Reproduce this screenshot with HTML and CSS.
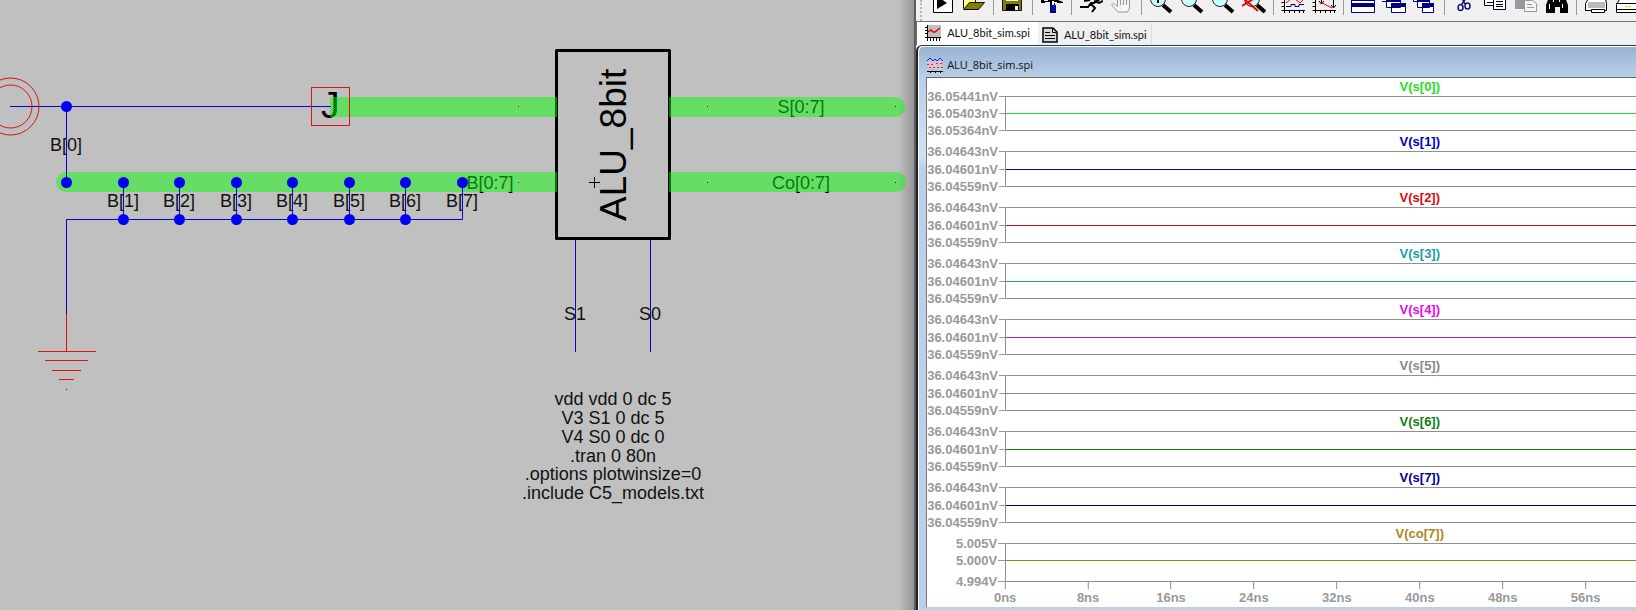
FILE: index.html
```
<!DOCTYPE html>
<html lang="en">
<head>
<meta charset="utf-8">
<title>ALU_8bit_sim</title>
<link rel="stylesheet" href="styles.css">
</head>
<body>
<main class="desktop">
<section class="schematic" aria-label="Schematic">
<svg class="canvas" xmlns="http://www.w3.org/2000/svg">
  <defs>
    <pattern id="dither" width="2" height="2" patternUnits="userSpaceOnUse">
      <rect class="d1" width="2" height="2"/>
      <path class="d2" d="M0 0h1v1h-1zM1 1h1v1h-1z"/>
    </pattern>
  </defs>
  <!-- net names drawn beneath the buses -->
  <g class="net under">
    <text x="490" y="189">B[0:7]</text>
    <text x="801" y="113">S[0:7]</text>
    <text x="801" y="189">Co[0:7]</text>
  </g>
  <text class="big" x="321" y="118">J</text>
  <!-- block -->
  <rect class="block" x="556.5" y="50.5" width="113" height="188"/>
  <text class="big" transform="translate(626 221) rotate(-90)">ALU_8bit</text>
  <path class="mark" d="M589 182.5h11M594.5 177v11"/>
  <!-- buses -->
  <path class="bus" d="M330 97h227v20h-227z"/>
  <path class="bus" d="M66 172h491v20h-491a10 10 0 0 1 0-20z"/>
  <path class="bus" d="M669 97h226a10 10 0 0 1 0 20h-226z"/>
  <path class="bus" d="M669 172h227a10 10 0 0 1 0 20h-227z"/>
  <path class="pin" d="M518 106h1v1h-1zM518 182h1v1h-1zM707 106h1v1h-1zM707 182h1v1h-1zM895 106h1v1h-1zM895 182h1v1h-1zM66 389h1v1h-1z"/>
  <g class="net">
    <text x="66" y="151">B[0]</text>
    <text x="123" y="207">B[1]</text>
    <text x="179" y="207">B[2]</text>
    <text x="236" y="207">B[3]</text>
    <text x="292" y="207">B[4]</text>
    <text x="349" y="207">B[5]</text>
    <text x="405" y="207">B[6]</text>
    <text x="462" y="207">B[7]</text>
    <text x="575" y="320">S1</text>
    <text x="650" y="320">S0</text>
    <text x="613" y="405">vdd vdd 0 dc 5</text>
    <text x="613" y="424">V3 S1 0 dc 5</text>
    <text x="613" y="443">V4 S0 0 dc 0</text>
    <text x="613" y="462">.tran 0 80n</text>
    <text x="613" y="480">.options plotwinsize=0</text>
    <text x="613" y="499">.include C5_models.txt</text>
  </g>
  <!-- wires -->
  <path class="wire" d="M10 106.5H331M66.5 106V182M66.5 314V219.5H462.5V182M123.5 182V219M179.5 182V219M236.5 182V219M292.5 182V219M349.5 182V219M405.5 182V219M575.5 240V352M650.5 240V352"/>
  <g class="dot">
    <circle cx="66.5" cy="106.5" r="5.5"/><circle cx="66.5" cy="182.5" r="5.5"/>
    <circle cx="123.5" cy="182.5" r="5.5"/><circle cx="179.5" cy="182.5" r="5.5"/><circle cx="236.5" cy="182.5" r="5.5"/><circle cx="292.5" cy="182.5" r="5.5"/><circle cx="349.5" cy="182.5" r="5.5"/><circle cx="405.5" cy="182.5" r="5.5"/><circle cx="462.5" cy="182.5" r="5.5"/>
    <circle cx="123.5" cy="219.5" r="5.5"/><circle cx="179.5" cy="219.5" r="5.5"/><circle cx="236.5" cy="219.5" r="5.5"/><circle cx="292.5" cy="219.5" r="5.5"/><circle cx="349.5" cy="219.5" r="5.5"/><circle cx="405.5" cy="219.5" r="5.5"/>
  </g>
  <!-- source, join and ground symbols -->
  <g class="symbol">
    <circle cx="10.5" cy="106.5" r="28.5"/><circle cx="10.5" cy="106.5" r="21.5"/>
    <rect x="311.5" y="87.5" width="38" height="38"/>
    <path d="M66.5 314v37M38 351.5h58M45 360.5h43M52 370.5h29M59 379.5h15"/>
  </g>
</svg>
</section>

<section class="viewer" aria-label="Simulator">
<div class="toolbar" role="toolbar" aria-label="Main">
  <button class="tool" aria-label="Run"><svg viewBox="0 0 24 21"><path fill="#fff" stroke="#000" d="M2.500-5v17.500h19v-17.500"/><path d="M6-4v13l10-6z"/></svg></button>
  <button class="tool" aria-label="Open"><svg viewBox="0 0 24 21"><path fill="#ffff80" stroke="#111" d="M1.500 8.500v-9h12v3"/><path fill="#808000" stroke="#111" d="M1.500 9.500l6-7h15l-6 7z"/></svg></button>
  <span class="sep"></span>
  <button class="tool" aria-label="Save"><svg viewBox="0 0 24 21"><path fill="#808000" stroke="#111" d="M1.500-2v12.500h19v-12.500"/><path fill="#f0f0f0" d="M5-2h12v3h-12z"/><path d="M5 4h13v6h-13z"/><path fill="#f0f0f0" d="M14 6h3v4h-3z"/></svg></button>
  <span class="sep"></span>
  <button class="tool" aria-label="Control panel"><svg viewBox="0 0 24 21"><path d="M1 0h3v1h4v-1h10l5 2v1h-6v-1h-3v2h-4v-2h-5v1h-4z"/><path fill="#0000d8" stroke="#001" d="M10.500 3.500h4v2h1v7h-5z"/><path fill="#fff" d="M12 1h2v4h-2z"/></svg></button>
  <span class="sep"></span>
  <button class="tool" aria-label="Start simulation"><svg viewBox="0 0 24 21"><path class="k2" d="M21-1l-6 4h-3l-3 4h-8M12 4l4 4-3 4M11 0l-6 1M15 1l5 2 4-2"/></svg></button>
  <button class="tool" aria-label="Halt"><svg viewBox="0 0 24 21"><path fill="#f8f8f8" stroke="#999" d="M8.500 12.500l-7-8 2-1 4 3v-9M10.500 5v-7M13.500 5v-7M16.500 5v-6M19.500 0v8l-2 4h-9"/></svg></button>
  <span class="sep"></span>
  <button class="tool" aria-label="Zoom area"><svg viewBox="0 0 24 21"><circle cx="9" cy="-1" r="7.500" fill="#c8ffff" stroke="#222"/><path stroke="#000" stroke-width="2" d="M9-3v6"/><path class="k3" d="M14 5l8 7"/></svg></button>
  <button class="tool" aria-label="Zoom back"><svg viewBox="0 0 24 21"><circle cx="9" cy="-1" r="7.500" fill="#c8ffff" stroke="#222"/><path class="k3" d="M14 5l8 7"/></svg></button>
  <button class="tool" aria-label="Zoom out"><svg viewBox="0 0 24 21"><circle cx="9" cy="-1" r="7.500" fill="#c8ffff" stroke="#222"/><path class="k3" d="M14 5l8 7"/></svg></button>
  <button class="tool" aria-label="Zoom full"><svg viewBox="0 0 24 21"><circle cx="10" cy="-1" r="7.500" fill="#c8ffff" stroke="#222"/><path class="k3" d="M15 5l8 7"/><path stroke="#f00" stroke-width="2" fill="none" d="M0 6l13-8M2-1l14 12"/></svg></button>
  <span class="sep"></span>
  <button class="tool" aria-label="Autorange"><svg viewBox="0 0 24 21"><path class="k1" d="M.5 10.500h24M3.500-1v14M.5 2.500h3M.5 6.500h3M8.500 10v3M13.500 10v3M18.500 10v3M22.500 10v3"/><path stroke="#e00" fill="none" d="M5 3l5-4M14-1l5 4 4-4"/><path stroke="#008" fill="none" d="M5 6.500h5v-2h4v2h4v-2h5"/></svg></button>
  <button class="tool" aria-label="Plot settings"><svg viewBox="0 0 24 21"><path class="k1" d="M.5 10.500h24M3.500-1v14M.5 2.500h3M.5 6.500h3M8.500 10v3M13.500 10v3M18.500 10v3M22.500 10v3M9.500-1v5M7 1l2.500 3 2.500-3M21.500-1v9M19 5l2.500 3 2.500-3"/><path stroke="#e00" fill="none" d="M8 2l12 6"/></svg></button>
  <span class="sep"></span>
  <button class="tool" aria-label="Tile windows"><svg viewBox="0 0 24 21"><path fill="#fff" stroke="#000080" d="M.5-5h23v17.500h-23z"/><path fill="#000080" d="M0 3h24v4h-24zM0-3h24v4h-24z"/></svg></button>
  <button class="tool" aria-label="Cascade windows"><svg viewBox="0 0 24 21"><path fill="#fff" stroke="#000080" d="M-.5-3.500h14v5h-14zM4.500-.5h14v8h-14zM9.500 3.500h14v9h-14z"/><path fill="#000080" d="M9 3h15v4h-15zM4 0h15v2h-15z"/></svg></button>
  <button class="tool" aria-label="Close windows"><svg viewBox="0 0 24 21"><path fill="#fff" stroke="#000080" d="M.5-3.500h10v5h-10zM4.500-.5h12v8h-12zM9.500 3.500h11v9h-11z"/><path fill="#000080" d="M9 3h12v4h-12zM4 0h13v2h-13z"/></svg></button>
  <span class="sep"></span>
  <button class="tool" aria-label="Cut"><svg viewBox="0 0 24 21"><g fill="none" stroke="#101070" stroke-width="1.500"><ellipse cx="8.500" cy="7.500" rx="2.500" ry="3"/><ellipse cx="15.500" cy="6" rx="2.500" ry="3"/><path d="M10 4l4-6M13 4l-3-6"/></g></svg></button>
  <button class="tool" aria-label="Copy"><svg viewBox="0 0 24 21"><path fill="#fff" stroke="#000" d="M1.500-3.500h11v9h-11z"/><path class="k1" d="M4 2.500h6"/><path fill="#fff" stroke="#000040" d="M10.500-2.500h12v12h-12z"/><path class="k1" d="M13 1.500h7M13 4.500h7M13 6.500h7"/></svg></button>
  <button class="tool" aria-label="Paste"><svg viewBox="0 0 24 21"><path fill="#999" d="M1-3h17v12h-17z"/><path fill="#f4f4f4" stroke="#999" d="M10.500 .5h8l4 3v8h-12z"/><path stroke="#999" d="M13 4.500h5M13 7.500h7"/></svg></button>
  <button class="tool" aria-label="Find"><svg viewBox="0 0 24 21"><path d="M4-3h6v3h4v-3h6l3 8v8h-8v-6h-5v6h-9v-8z"/><path stroke="#fff" fill="none" d="M4.500 4v5M17.500 4v4M8.500-1v3M14.500 0v2"/></svg></button>
  <span class="sep"></span>
  <button class="tool" aria-label="Print"><svg viewBox="0 0 24 21"><path fill="#fff" stroke="#000" d="M1.500 10.500v-7l3-5h17l1 5v7z"/><path fill="#bbb" d="M4 2h17v6h-17z"/><path fill="#fff" stroke="#000" d="M7.500 9.500h13v3h-13z"/></svg></button>
  <button class="tool" aria-label="Print setup"><svg viewBox="0 0 24 21"><path fill="#fff" stroke="#000" d="M1.500 12.500v-8l3-5h20v13z"/><path stroke="#000" d="M1 3.500h23M1 9.500h23"/><path stroke="#dd0" d="M10 6.500h6"/></svg></button>
</div>
<div class="tabs" role="tablist">
  <button class="tab current" role="tab" aria-selected="true"><svg class="icon" viewBox="0 0 16 16"><path fill="#c0c0c0" d="M2 0h14v13h-14z"/><path class="k1" d="M2.500 0v16M0 12.500h16M0 2.500h2M0 5.500h2M0 8.500h2M5.500 12v4M8.500 12v4M11.500 12v4M14.500 12v4"/><path fill="none" stroke="#e00" stroke-width="1.500" d="M3 7l3-2 2 2h2l5-4"/></svg><span>ALU_8bit_sim.spi</span></button>
  <button class="tab" role="tab" aria-selected="false"><svg class="icon" viewBox="0 0 16 16"><path fill="#d8d8d8" stroke="#000" stroke-width="1.500" d="M1 1h10l4 4v10h-14z"/><path stroke="#000" fill="none" d="M10.500 1v4.500h4M3 5.500h5M3 8.500h10M3 11.500h10"/></svg><span>ALU_8bit_sim.spi</span></button>
</div>
<article class="window">
  <header class="titlebar"><svg class="icon" viewBox="0 0 16 16"><path fill="#d8c4d0" d="M1 4h14v8h-14z"/><path fill="none" stroke="#22c" d="M0 4l3-3 3 3 2-2 2 2 3-3 3 3"/><path fill="none" stroke="#c33" stroke-dasharray="2 2" d="M0 7.500h8M2 10.500h14M9 6.500h6"/><path class="k1" d="M0 14.500h16M3.500 15v1M8.500 15v1M13.500 15v1"/></svg><h1 class="title">ALU_8bit_sim.spi</h1></header>
  <div class="client">
  <div class="plots">
    <section class="plot first"><h2 class="name lime">V(s[0])</h2><div class="axis"><span>36.05441nV</span><span>36.05403nV</span><span>36.05364nV</span></div><div class="chart"><div class="trace lime"></div></div></section>
    <section class="plot"><h2 class="name blue">V(s[1])</h2><div class="axis"><span>36.04643nV</span><span>36.04601nV</span><span>36.04559nV</span></div><div class="chart"><div class="trace navy"></div></div></section>
    <section class="plot"><h2 class="name red">V(s[2])</h2><div class="axis"><span>36.04643nV</span><span>36.04601nV</span><span>36.04559nV</span></div><div class="chart"><div class="trace darkred"></div></div></section>
    <section class="plot"><h2 class="name teal">V(s[3])</h2><div class="axis"><span>36.04643nV</span><span>36.04601nV</span><span>36.04559nV</span></div><div class="chart"><div class="trace teal"></div></div></section>
    <section class="plot"><h2 class="name magenta">V(s[4])</h2><div class="axis"><span>36.04643nV</span><span>36.04601nV</span><span>36.04559nV</span></div><div class="chart"><div class="trace purple"></div></div></section>
    <section class="plot"><h2 class="name gray">V(s[5])</h2><div class="axis"><span>36.04643nV</span><span>36.04601nV</span><span>36.04559nV</span></div><div class="chart"><div class="trace gray"></div></div></section>
    <section class="plot"><h2 class="name green">V(s[6])</h2><div class="axis"><span>36.04643nV</span><span>36.04601nV</span><span>36.04559nV</span></div><div class="chart"><div class="trace green"></div></div></section>
    <section class="plot"><h2 class="name navy">V(s[7])</h2><div class="axis"><span>36.04643nV</span><span>36.04601nV</span><span>36.04559nV</span></div><div class="chart"><div class="trace midnight"></div></div></section>
    <section class="plot last"><h2 class="name gold">V(co[7])</h2><div class="axis"><span>5.005V</span><span>5.000V</span><span>4.994V</span></div><div class="chart"><div class="trace olive"></div></div></section>
    <div class="time"><span>0ns</span><span>8ns</span><span>16ns</span><span>24ns</span><span>32ns</span><span>40ns</span><span>48ns</span><span>56ns</span></div>
  </div>
  </div>
</article>
</section>
</main>
</body>
</html>
```
FILE: styles.css
```
* { box-sizing: border-box; }

body {
  margin: 0;
  font-family: "Liberation Sans", Arial, sans-serif;
  background: #c0c0c0;
  overflow: hidden;
}

.desktop {
  display: flex;
  height: 100vh;
}

/* schematic editor */
.schematic {
  flex: 0 0 56%;
  min-width: 0;
  overflow: hidden;
  border-right: 2px solid #5c5c5c;
  background: linear-gradient(to left, #969696, #c0c0c0 16px);
}

.canvas { display: block; width: 100%; height: 100%; }
.net { font-size: 18px; fill: #111; text-anchor: middle; }
.under { fill: #000; }
.big { font-size: 37px; fill: #000; }
.block { fill: #c0c0c0; stroke: #000; stroke-width: 3; stroke-linejoin: round; }
.mark { stroke: #000; }
.bus { fill: url(#dither); }
.d1 { fill: #0f0; fill-opacity: .34; }
.d2 { fill: #0f0; fill-opacity: .4; }
.pin { fill: #222; }
.wire { fill: none; stroke: #0808c4; }
.dot { fill: #0000f4; }
.symbol { fill: none; stroke: #e01010; }

/* simulator */
.viewer {
  flex: 1;
  min-width: 0;
  display: flex;
  flex-direction: column;
  overflow: hidden;
  background: #f0f0f0;
}

.toolbar {
  display: flex;
  gap: 7px;
  height: 21px;
  padding-left: 9px;
  margin-left: 4px;
  border-left: 2px dotted #b4b4b4;
  overflow: hidden;
}

.tool {
  flex: none;
  width: 24px;
  height: 21px;
  padding: 0;
  border: 0;
  background: none;
}
.tool svg { display: block; width: 24px; height: 21px; }
.sep { flex: none; width: 1px; height: 15px; background: #999; }
.k1 { fill: none; stroke: #000; }
.k2 { fill: none; stroke: #000; stroke-width: 2; }
.k3 { fill: none; stroke: #000; stroke-width: 4; }

.tabs {
  display: flex;
  height: 24px;
  border-top: 1px solid #707070;
  border-left: 1px solid #707070;
}

.tab {
  display: flex;
  align-items: center;
  gap: 6px;
  padding: 0 4px;
  border: 0;
  border-right: 1px solid #ddd;
  background: #f0f0f0;
  font: 11px/16px Lato, "Liberation Sans", sans-serif;
  color: #111;
}
.tab + .tab { border-top: 2px solid #f0f0f0; }
.tab.current { padding: 0 7px 1px 8px; background: #fff; border-color: #fff; }
.icon { flex: none; width: 16px; height: 16px; }

.window {
  flex: 1;
  min-height: 0;
  display: flex;
  flex-direction: column;
  padding: 0 0 3px 8px;
  border-top: 1px solid #26384c;
  border-left: 2px solid #222;
  border-top-left-radius: 6px;
  background: linear-gradient(#98b3d2, #b9d0e9 32px, #d0e2f2 110px, #b9d0e9 122px);
  box-shadow: inset 1px 1px 0 #fff;
}

.titlebar {
  display: flex;
  align-items: center;
  gap: 4px;
  height: 31px;
  padding: 7px 0 0 1px;
}
.title {
  margin: 0;
  font: 11px/16px "Open Sans", "Noto Sans", sans-serif;
  color: #111;
}

.client {
  flex: 1;
  min-height: 0;
  border-top: 1px solid #666;
  border-left: 1px solid #777;
  background: #fff;
  overflow: hidden;
}

/* the time axis runs to 80ns, past the visible part of the window */
.plots { width: 128%; font-size: 13px; font-weight: bold; }

.plot {
  display: grid;
  grid-template: 17px 36px / 78px 1fr;
  margin-bottom: 3px;
}
.plot.first { grid-template-rows: 18px 35px; }
.plot.last { grid-template-rows: 17px 39px; margin-bottom: 0; }

.name {
  grid-column: 2;
  margin: 0;
  font-size: 13px;
  line-height: 15px;
  text-align: center;
}
.first .name { line-height: 17px; }

.axis {
  display: grid;
  grid-template-rows: 18px 17px 17px;
  margin-top: -8px;
  line-height: 17px;
  color: #999;
}
.first .axis { grid-template-rows: 17px 17px 17px; }
.last .axis { grid-template-rows: 17px 21px 17px; }
.axis span { display: flex; justify-content: flex-end; gap: 1px; height: 17px; }
.axis span::after { content: ""; width: 7px; height: 1px; margin-top: 8px; background: #999; }

.chart {
  border: 1px solid #909090;
  border-right: 0;
  padding-top: 17px;
}
.first .chart, .last .chart { padding-top: 16px; }
.trace { height: 1px; background: currentColor; }

.time {
  display: grid;
  grid-template-columns: repeat(10, 1fr);
  margin-left: 78px;
  line-height: 18px;
  color: #999;
}
.time span { width: max-content; transform: translateX(-50%); }
.time span::before { content: ""; display: block; width: 1px; height: 7px; margin: 0 auto; background: #909090; }

.lime { color: #1fe01f; }
.blue { color: #0000c0; }
.navy { color: #000098; }
.midnight { color: #000060; }
.red { color: #dc0808; }
.darkred { color: #b01010; }
.teal { color: #18a0a0; }
.magenta { color: #e808e8; }
.purple { color: #b020b8; }
.gray { color: #888; }
.green { color: #108010; }
.gold { color: #a88820; }
.olive { color: #9a8410; }
```
